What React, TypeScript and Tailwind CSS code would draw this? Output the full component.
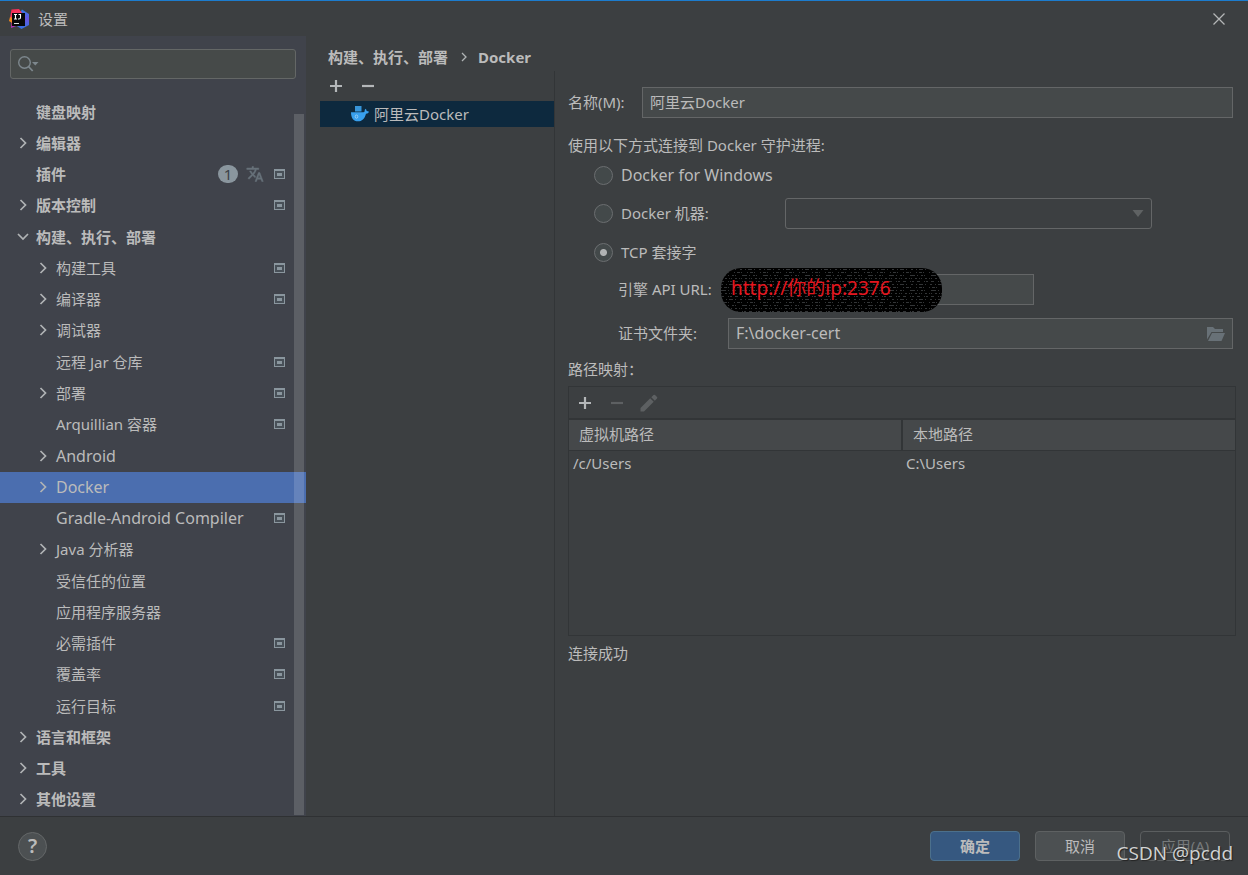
import React from 'react';

type TreeItem = {
  label: string;
  level?: 1;
  arrow?: 'right' | 'down';
  project?: boolean;
  plugins?: boolean;
  selected?: boolean;
  latin?: boolean;
};

const items: TreeItem[] = [
  { label: '键盘映射' },
  { label: '编辑器', arrow: 'right' },
  { label: '插件', plugins: true, project: true },
  { label: '版本控制', arrow: 'right', project: true },
  { label: '构建、执行、部署', arrow: 'down' },
  { label: '构建工具', level: 1, arrow: 'right', project: true },
  { label: '编译器', level: 1, arrow: 'right', project: true },
  { label: '调试器', level: 1, arrow: 'right' },
  { label: '远程 Jar 仓库', level: 1, project: true },
  { label: '部署', level: 1, arrow: 'right', project: true },
  { label: 'Arquillian 容器', level: 1, project: true },
  { label: 'Android', level: 1, arrow: 'right', latin: true },
  { label: 'Docker', level: 1, arrow: 'right', selected: true, latin: true },
  { label: 'Gradle-Android Compiler', level: 1, project: true, latin: true },
  { label: 'Java 分析器', level: 1, arrow: 'right' },
  { label: '受信任的位置', level: 1 },
  { label: '应用程序服务器', level: 1 },
  { label: '必需插件', level: 1, project: true },
  { label: '覆盖率', level: 1, project: true },
  { label: '运行目标', level: 1, project: true },
  { label: '语言和框架', arrow: 'right' },
  { label: '工具', arrow: 'right' },
  { label: '其他设置', arrow: 'right' },
];

const IdeaLogo = () => (
  <svg width="20" height="20" viewBox="0 0 20 20" aria-hidden="true">
    <defs>
      <linearGradient id="ideaBlue" x1="0" y1="0" x2="0" y2="1">
        <stop offset="0" stopColor="#2f7be8" />
        <stop offset="0.5" stopColor="#6a55e0" />
        <stop offset="1" stopColor="#2f74e4" />
      </linearGradient>
      <linearGradient id="ideaPink" x1="0" y1="0" x2="0.3" y2="1">
        <stop offset="0" stopColor="#fb2a4d" />
        <stop offset="0.6" stopColor="#f03a6c" />
        <stop offset="1" stopColor="#a12fd0" />
      </linearGradient>
    </defs>
    <path d="M11 4 13 0.5 20 5 20 16 12.5 20 7 16.5Z" fill="url(#ideaBlue)" />
    <path d="M2.5 0.5 10 0 13.5 4.5 11 15 6 17.5 2 19 2.5 14 1 9Z" fill="url(#ideaPink)" />
    <path d="M1 8 4 9 4 14.5 0 12Z" fill="#f98a1c" />
    <rect x="3" y="4" width="13" height="13" fill="#08080a" />
    <path d="M5 5.5h3M6.5 5.5v4.500M5 10h3M9.500 5.500h2v3q0 1.500-1.500 1.500H9" stroke="#fff" strokeWidth="1.1" fill="none" />
    <path d="M5 14.5h5" stroke="#ddd" strokeWidth="1" />
  </svg>
);

const DockerIcon = () => (
  <svg width="18" height="16" viewBox="0 0 18 16" className="shrink-0" aria-hidden="true">
    <path d="M4 0h6.5v5.5H4z" fill="#3795d9" />
    <path d="M0 6.2h12.5c.9 0 1.3-.7 1.2-2.2l.8-1.2c.8.7 1.1 1.5 1.1 2.3 1 0 1.8.2 2.4.6-.5 1.2-1.5 1.9-3 2C13.6 13 10.8 15.3 7 15.3 2.4 15.3 0 12 0 6.2Z" fill="#38a0ee" />
    <ellipse cx="5.5" cy="10.6" rx="1.3" ry="1.6" fill="none" stroke="#a9d5f5" strokeWidth="0.8" />
  </svg>
);

const Chevron = ({ dir }: { dir: 'right' | 'down' }) => (
  <svg width="12" height="12" viewBox="0 0 12 12" fill="none" stroke="#b0b3b5" strokeWidth="1.7" aria-hidden="true">
    {dir === 'right' ? <path d="M3.5 1l5 5-5 5" /> : <path d="M1 3l5 5 5-5" />}
  </svg>
);

const ProjectIcon = () => (
  <svg width="11" height="10" viewBox="0 0 11 10" aria-hidden="true">
    <rect width="11" height="10" fill="#8a969e" />
    <rect x="1" y="2" width="9" height="7" fill="#485058" />
    <rect x="3" y="4" width="5" height="3" fill="#8a969e" />
  </svg>
);

const TranslateIcon = () => (
  <svg width="18" height="18" viewBox="0 0 24 24" fill="#68727a" stroke="#68727a" strokeWidth="0.6" aria-hidden="true">
    <path d="M12.87 15.07l-2.54-2.51.03-.03A17.52 17.52 0 0 0 14.07 6H17V4h-7V2H8v2H1v2h11.17C11.5 7.92 10.44 9.75 9 11.35 8.07 10.32 7.3 9.19 6.69 8h-2c.73 1.63 1.73 3.17 2.98 4.56l-5.09 5.02L4 19l5-5 3.11 3.11.76-2.04zM18.5 10h-2L12 22h2l1.12-3h4.75L21 22h2l-4.5-12zm-2.62 7l1.62-4.33L19.12 17h-3.24z" />
  </svg>
);

const PlusIcon = () => (
  <svg width="14" height="14" viewBox="0 0 14 14" stroke="#b4b7b9" strokeWidth="2.2" aria-hidden="true">
    <path d="M7 1v12M1 7h12" />
  </svg>
);

const MinusIcon = ({ disabled }: { disabled?: boolean }) => (
  <svg width="14" height="14" viewBox="0 0 14 14" stroke={disabled ? '#5d6062' : '#b4b7b9'} strokeWidth="2.2" aria-hidden="true">
    <path d="M1 7h12" />
  </svg>
);

const toolClass = 'flex w-8 justify-center';

const Sidebar: React.FC = () => (
  <aside className="flex w-[306px] shrink-0 flex-col bg-[#40434b]">
    <div className="px-[10px] pt-[13px]">
      <div className="flex h-[30px] items-center rounded-[3px] border border-[#646766] bg-[#464a49] pl-[7px]">
        <svg width="21" height="16" viewBox="0 0 21 16" fill="none" aria-hidden="true">
          <circle cx="6.5" cy="6.5" r="5.8" stroke="#7d878d" strokeWidth="1.4" />
          <path d="M10.5 10.5l4.2 4.5" stroke="#7d878d" strokeWidth="1.8" />
          <path d="M14 6h6.5l-3.2 3.5z" fill="#7d878d" />
        </svg>
        <input type="text" aria-label="搜索" className="min-w-0 flex-1 bg-transparent px-1 outline-none" />
      </div>
    </div>
    <div className="relative mt-[18px] flex flex-1 flex-col">
      <ul className="flex flex-1 flex-col">
        {items.map((item) => (
          <li key={item.label} className={item.selected ? 'flex flex-1 bg-[#4b6eaf]' : 'flex flex-1'}>
            <button
              type="button"
              className={
                item.level
                  ? 'flex min-h-[31px] w-full items-center pr-[21px] pb-[2px] pl-[37px] text-left'
                  : 'flex min-h-[31px] w-full items-center pr-[21px] pb-[2px] pl-[17px] text-left font-bold'
              }
            >
              <span className="w-[19px] shrink-0">{item.arrow && <Chevron dir={item.arrow} />}</span>
              <span className={item.latin ? 'flex-1 text-[16px] leading-[22px] whitespace-nowrap' : 'flex-1 whitespace-nowrap'}>
                {item.label}
              </span>
              {item.plugins && (
                <span className="mr-[10px] flex items-center gap-2">
                  <span className="flex h-[18px] w-5 items-center justify-center rounded-full bg-[#8a969e] font-normal text-[#3d4248]">1</span>
                  <TranslateIcon />
                </span>
              )}
              {item.project && <ProjectIcon />}
            </button>
          </li>
        ))}
      </ul>
      <div className="absolute top-[17px] right-[2px] bottom-px w-[10px] bg-white/15" />
    </div>
  </aside>
);

const ServerList: React.FC = () => (
  <div className="w-[235px] shrink-0 border-r border-[#323537]">
    <div className="flex h-[30px] items-center">
      <button type="button" aria-label="添加" className={toolClass}><PlusIcon /></button>
      <button type="button" aria-label="移除" className={toolClass}><MinusIcon /></button>
    </div>
    <button type="button" className="flex h-[26px] w-full items-center gap-[5px] bg-[#0d293e] pl-[31px] text-left">
      <DockerIcon />
      阿里云Docker
    </button>
  </div>
);

const radioClass =
  'size-[19px] shrink-0 appearance-none rounded-full border border-[#6b6e70] bg-[#43494a] checked:bg-[radial-gradient(circle,#b0b2b3_3px,#43494a_4px)]';
const fieldClass = 'h-[31px] min-w-0 border border-[#646667] bg-[#45494a] px-[7px] pb-[2px] outline-none';

const DockerForm: React.FC = () => (
  <form className="flex min-w-0 flex-1 flex-col pt-4 pr-3 pl-[13px]">
    <div className="flex items-center pr-[3px]">
      <label htmlFor="name" className="w-[74px] pb-[2px]">名称(M):</label>
      <input id="name" type="text" defaultValue="阿里云Docker" className={`${fieldClass} flex-1`} />
    </div>

    <p className="mt-4">使用以下方式连接到 Docker 守护进程:</p>
    <div className="mt-2 flex items-center gap-2 pl-[26px]">
      <input id="windows" type="radio" name="connection" className={radioClass} />
      <label htmlFor="windows" className="text-[16px] leading-[22px]">Docker for Windows</label>
    </div>
    <div className="mt-3 flex items-center pl-[26px]">
      <div className="flex w-[191px] items-center gap-2">
        <input id="machine" type="radio" name="connection" className={radioClass} />
        <label htmlFor="machine" className="pb-[2px]">Docker 机器:</label>
      </div>
      <div className="relative mr-[84px] flex-1">
        <select disabled aria-label="Docker 机器" className="block h-[31px] w-full appearance-none rounded-[3px] border border-[#646667]" />
        <svg width="12" height="7" viewBox="0 0 12 7" className="absolute top-3 right-2" aria-hidden="true">
          <path d="M0.5 0h11l-5.5 7z" fill="#5f6263" />
        </svg>
      </div>
    </div>
    <div className="mt-3 flex items-center gap-2 pl-[26px]">
      <input id="tcp" type="radio" name="connection" defaultChecked className={radioClass} />
      <label htmlFor="tcp">TCP 套接字</label>
    </div>

    <div className="relative mt-[11px] flex items-center pl-[50px]">
      <label htmlFor="url" className="w-[110px] pb-[2px]">引擎 API URL:</label>
      <input id="url" type="text" className={`${fieldClass} w-[306px]`} />
      <div className="absolute -top-[6px] left-[153px] flex h-11 w-[221px] items-center overflow-hidden rounded-[20px] bg-black">
        <svg className="absolute inset-0 size-full" aria-hidden="true">
          <defs>
            <pattern id="scratches" width="221" height="15" patternUnits="userSpaceOnUse">
              <g stroke="#333537">
                <path d="M0 1.5h221" strokeDasharray="2 3 1 2 4 2 1 4" />
                <path d="M0 4.5h221" strokeDasharray="1 2 3 1 1 5" />
                <path d="M0 7.5h221" strokeDasharray="5 2 1 3 2 1 1 6" />
                <path d="M0 10.5h221" strokeDasharray="1 3 2 2 1 1" />
                <path d="M0 13.5h221" strokeDasharray="3 4 1 1 2 3" />
              </g>
            </pattern>
          </defs>
          <rect width="100%" height="100%" fill="url(#scratches)" />
        </svg>
        <span className="relative pb-1 pl-[10px] text-[19px] whitespace-nowrap text-[#e5161f]">http://你的ip:2376</span>
      </div>
    </div>
    <div className="mt-[13px] flex items-center pr-[3px] pl-[50px]">
      <label htmlFor="cert" className="w-[110px] pb-[2px]">证书文件夹:</label>
      <div className="relative flex flex-1">
        <input id="cert" type="text" defaultValue="F:\docker-cert" className={`${fieldClass} flex-1 text-[16px]`} />
        <button type="button" aria-label="浏览" className="absolute top-[9px] right-2">
          <svg width="18" height="14" viewBox="0 0 18 14" fill="#687177" aria-hidden="true">
            <path d="M0 0h6l2 2h8v3H4.5L0 12.5z" />
            <path d="M5 6h13l-3.5 8H1z" />
          </svg>
        </button>
      </div>
    </div>

    <p className="mt-[9px]">路径映射：</p>
    <div className="mt-[6px] min-h-[250px] border border-[#323537]">
      <div className="flex h-[31px] items-center">
        <button type="button" aria-label="添加映射" className={toolClass}><PlusIcon /></button>
        <button type="button" aria-label="移除映射" disabled className={toolClass}><MinusIcon disabled /></button>
        <button type="button" aria-label="编辑映射" disabled className={toolClass}>
          <svg width="18" height="18" viewBox="0 0 18 18" fill="#5d6062" aria-hidden="true">
            <path d="M0.5 14v3.5H4L13.7 7.8 10.2 4.3zM11.3 3.2l3.5 3.5 2.2-2.2q.7-.8 0-1.5l-2-2q-.8-.7-1.5 0z" />
          </svg>
        </button>
      </div>
      <table className="w-full table-fixed border-collapse text-left">
        <thead>
          <tr className="h-[31px] border-t-2 border-b border-[#323537] bg-[#45484a]">
            <th className="border-r-2 border-[#323537] pb-[2px] pl-[10px] font-normal">虚拟机路径</th>
            <th className="pb-[2px] pl-[10px] font-normal">本地路径</th>
          </tr>
        </thead>
        <tbody>
          <tr className="h-7">
            <td className="pb-[2px] pl-1">/c/Users</td>
            <td className="pb-[2px] pl-1">C:\Users</td>
          </tr>
        </tbody>
      </table>
    </div>
    <p className="mt-[6px]">连接成功</p>
  </form>
);

const Footer: React.FC = () => (
  <footer className="relative flex h-[59px] shrink-0 items-center border-t border-[#2f3133] px-[18px]">
    <button
      type="button"
      aria-label="帮助"
      className="flex size-[29px] items-center justify-center rounded-full border border-[#646768] bg-[#4c5052] text-xl font-semibold"
    >
      ?
    </button>
    <div className="ml-auto flex gap-[15px]">
      <button type="button" className="h-[30px] w-[90px] rounded-[4px] border border-[#4c708c] bg-[#365880] font-bold">确定</button>
      <button type="button" className="h-[30px] w-[90px] rounded-[4px] border border-[#5e6162] bg-[#4c5052]">取消</button>
      <button type="button" disabled className="h-[30px] w-[90px] rounded-[4px] border border-[#5b5e5f] text-[#777a7b]">应用(A)</button>
    </div>
    <span className="absolute right-[15px] bottom-2 font-['Open_Sans',sans-serif] text-[19px] leading-7 whitespace-nowrap text-[#d2d3d3] [text-shadow:1px_1px_1px_#222]">
      CSDN @pcdd
    </span>
  </footer>
);

const App: React.FC = () => (
  <div className="flex min-h-screen flex-col border-t border-[#1c7cce] bg-[#3c3f41] font-['Noto_Sans','Noto_Sans_CJK_SC',sans-serif] text-[15px] leading-[22px] text-[#bbbbbb]">
    <header className="flex h-[35px] shrink-0 items-center pr-[23px] pl-[9px]">
      <IdeaLogo />
      <h1 className="ml-[9px]">设置</h1>
      <button type="button" aria-label="关闭" className="ml-auto">
        <svg width="12" height="12" viewBox="0 0 12 12" stroke="#b4b6b7" strokeWidth="1.3" aria-hidden="true">
          <path d="M0.5 0.5l11 11M11.5 0.5l-11 11" />
        </svg>
      </button>
    </header>
    <div className="flex flex-1">
      <Sidebar />
      <main className="flex min-w-0 flex-1 flex-col pl-[14px]">
        <nav aria-label="位置" className="flex h-[35px] items-center pt-[7px] pl-2 font-bold">
          <span>构建、执行、部署</span>
          <svg width="6" height="10" viewBox="0 0 6 10" fill="none" stroke="#b0b3b5" strokeWidth="1.3" className="mr-[11px] ml-[13px]" aria-hidden="true">
            <path d="M1 1l4 4-4 4" />
          </svg>
          <span>Docker</span>
        </nav>
        <div className="flex flex-1">
          <ServerList />
          <DockerForm />
        </div>
      </main>
    </div>
    <Footer />
  </div>
);

export default App;
